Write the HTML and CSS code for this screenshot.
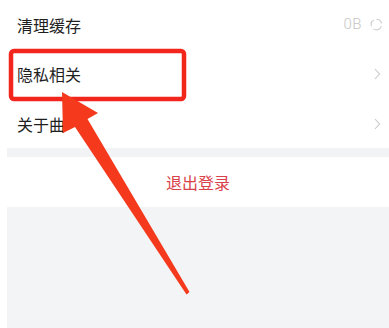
FILE: index.html
```html
<!DOCTYPE html>
<html lang="zh">
<head>
<meta charset="utf-8">
<link rel="stylesheet" href="styles.css">
</head>
<body>
<div class="page">
  <div class="list">
    <div class="row row-first">
      <span class="label">清理缓存</span>
      <span class="extra">
        <span class="size">0B</span>
        <svg class="refresh" width="13" height="13" viewBox="0 0 13 13">
          <path d="M6.5 1.3 A5.2 5.2 0 0 1 11.6 5.4" fill="none" stroke="#cdcdcd" stroke-width="1.1"/>
          <path d="M11.4 8.2 A5.2 5.2 0 0 1 3.4 10.9" fill="none" stroke="#cdcdcd" stroke-width="1.1"/>
          <path d="M1.5 8.2 A5.2 5.2 0 0 1 3.8 2.0" fill="none" stroke="#cdcdcd" stroke-width="1.1"/>
        </svg>
      </span>
    </div>
    <div class="row">
      <span class="label">隐私相关</span>
      <svg class="chev" width="7" height="12" viewBox="0 0 7 12"><path d="M1 1 L5.5 6 L1 11" fill="none" stroke="#c8c8c8" stroke-width="1.1"/></svg>
    </div>
    <div class="row row-last">
      <span class="label">关于曲</span>
      <svg class="chev" width="7" height="12" viewBox="0 0 7 12"><path d="M1 1 L5.5 6 L1 11" fill="none" stroke="#c8c8c8" stroke-width="1.1"/></svg>
    </div>
  </div>
  <div class="gap"></div>
  <div class="logout">退出登录</div>
  <div class="bottom"></div>
</div>
<svg class="overlay" width="389" height="328" viewBox="0 0 389 328">
  <rect x="11" y="51" width="173" height="48" rx="3" ry="3" fill="none" stroke="#f2261d" stroke-width="4.5"/>
  <polygon points="62,92 98,113 87.5,119 189.5,292 186.5,294.5 75,127 63,133" fill="#f4391c"/>
</svg>
</body>
</html>
```
FILE: styles.css
```css
html, body {
  margin: 0;
  padding: 0;
  background: #ffffff;
}
body {
  width: 389px;
  height: 328px;
  overflow: hidden;
  position: relative;
  font-family: "Noto Sans CJK SC", "Noto Sans", sans-serif;
}
.page {
  display: flex;
  flex-direction: column;
  height: 328px;
}
.list {
  display: flex;
  flex-direction: column;
  background: #ffffff;
}
.row {
  height: 50px;
  display: flex;
  align-items: center;
  justify-content: space-between;
  padding: 0 6px 0 17px;
}
.row-first {
  height: 49px;
}
.row-last {
  height: 49px;
}
.label {
  font-size: 16px;
  color: #1f1f1f;
  line-height: 1;
}
.extra {
  display: flex;
  align-items: center;
  gap: 8px;
}
.size {
  font-size: 15px;
  font-weight: 300;
  color: #c6c6c6;
  font-family: "Roboto", "Noto Sans", sans-serif;
  letter-spacing: 0.5px;
  line-height: 1;
}
.refresh {
  display: block;
}
.chev {
  display: block;
  margin-right: 2px;
}
.gap {
  height: 9px;
  margin-left: 7px;
  background: #f2f3f5;
}
.logout {
  height: 50px;
  display: flex;
  align-items: center;
  justify-content: center;
  margin-left: 7px;
  font-size: 16px;
  color: #d9424a;
  background: #ffffff;
}
.bottom {
  flex: 1;
  margin-left: 7px;
  background: #f3f4f6;
}
.overlay {
  position: absolute;
  left: 0;
  top: 0;
}
```
